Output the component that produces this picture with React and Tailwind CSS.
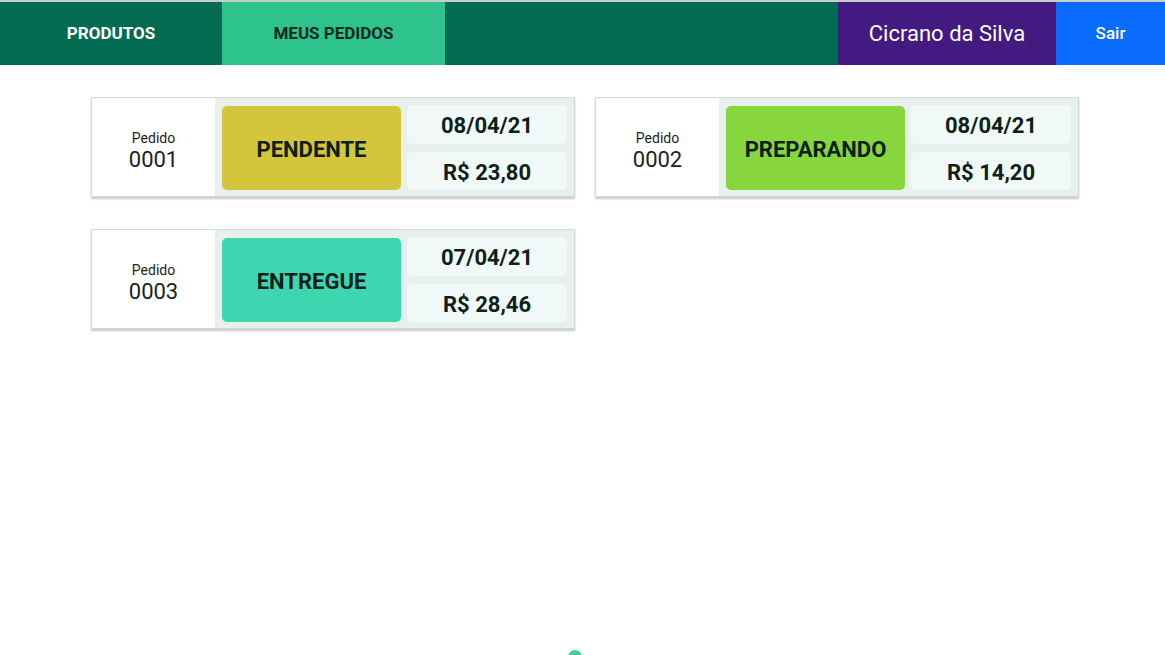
import React from "react";

const orders = [
  { id: "0001", status: "PENDENTE", color: "bg-[#d4c53c]", date: "08/04/21", price: "R$ 23,80" },
  { id: "0002", status: "PREPARANDO", color: "bg-[#87d63d]", date: "08/04/21", price: "R$ 14,20" },
  { id: "0003", status: "ENTREGUE", color: "bg-[#3dd6b1]", date: "07/04/21", price: "R$ 28,46" },
];

function Card({ o }) {
  return (
    <div className="flex h-[100px] w-[484px] border border-[#d3dad8] bg-white shadow-[0_2px_2px_rgba(0,0,0,0.22)]">
      <div className="flex w-[123px] flex-col items-center justify-center pt-[7px] text-[#1a1f1d]">
        <span className="text-[14px] leading-[18px]">Pedido</span>
        <span className="text-[22px] leading-[26px]">{o.id}</span>
      </div>
      <div className="flex flex-1 gap-[6px] bg-[#e8f0ee] pl-[7px] pr-[7px] pt-[8px] pb-[6px]">
        <div className={`flex w-[179px] items-center justify-center rounded-[5px] pt-[2px] ${o.color}`}>
          <span className="text-[22px] font-bold text-[#0d1f18]">{o.status}</span>
        </div>
        <div className="-mt-[1px] flex w-[160px] flex-col gap-[8px]">
          <div className="flex h-[39px] items-center justify-center rounded-[5px] bg-[#f1f9f8] pt-[1px] text-[22px] font-bold text-[#0d1f18]">{o.date}</div>
          <div className="flex h-[38px] items-center justify-center rounded-[5px] bg-[#f1f9f8] pt-[2px] text-[22px] font-bold text-[#0d1f18]">{o.price}</div>
        </div>
      </div>
    </div>
  );
}

export default function App() {
  return (
    <div className="relative h-[655px] w-[1165px] overflow-hidden bg-white" style={{ fontFamily: "Roboto, 'Liberation Sans', sans-serif" }}>
      <header className="flex h-[65px] border-t-2 border-[#c9cecc] bg-[#046b53]">
        <div className="flex w-[222px] items-center justify-center text-[17px] font-bold text-white">PRODUTOS</div>
        <div className="flex w-[223px] items-center justify-center bg-[#2ec28d] text-[17px] font-bold text-[#082a1f]">MEUS PEDIDOS</div>
        <div className="flex-1" />
        <div className="flex w-[218px] items-center justify-center bg-[#431a80] text-[22px] text-white">Cicrano da Silva</div>
        <div className="flex w-[109px] items-center justify-center bg-[#0a6cfe] text-[17px] font-medium text-white">Sair</div>
      </header>
      <main className="grid grid-cols-[484px_484px] gap-x-[20px] gap-y-[32px] pl-[91px] pt-[32px]">
        {orders.map((o) => (
          <Card key={o.id} o={o} />
        ))}
      </main>
      <div className="absolute left-[568px] top-[650px] h-[14px] w-[14px] rounded-full bg-[#3fcf9e]" />
    </div>
  );
}
